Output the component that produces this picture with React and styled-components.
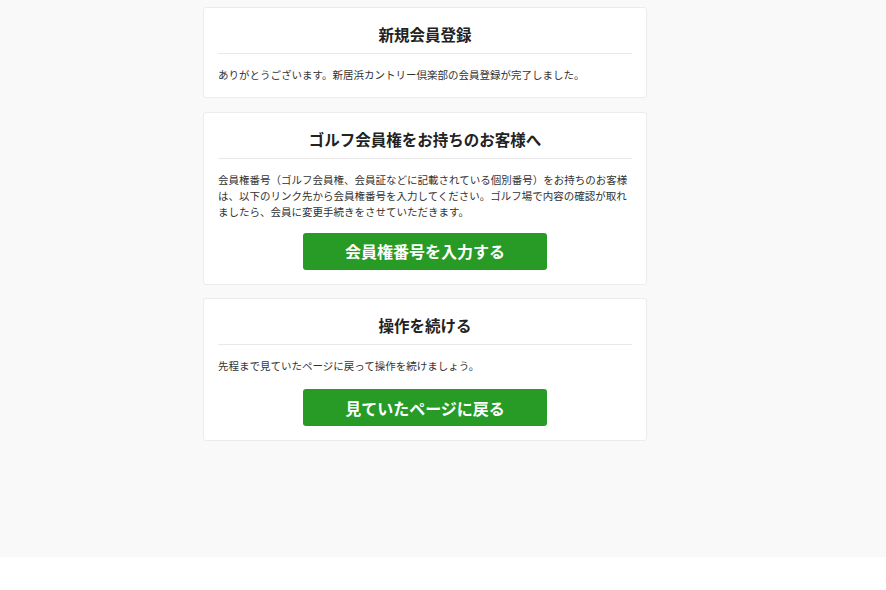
import styled, { createGlobalStyle } from 'styled-components';

const GlobalStyle = createGlobalStyle`
  html, body {
    margin: 0;
    padding: 0;
    background: #fff;
  }
  body {
    font-family: "Noto Sans CJK JP", "Noto Sans", sans-serif;
    color: #333;
  }
`;

const Main = styled.main`
  background-color: #f9f9f9;
  padding: 7px 0 116px 203px;
`;

const Column = styled.div`
  width: 444px;
  display: flex;
  flex-direction: column;
  gap: 13.5px;
`;

const Card = styled.section`
  box-sizing: border-box;
  background: #fff;
  border: 1px solid #ececec;
  border-radius: 3px;
  padding: 14px;
`;

const Title = styled.h2`
  margin: 0 0 13px;
  padding-bottom: 7px;
  border-bottom: 1px solid #e8e8e8;
  font-size: 15.5px;
  line-height: 24px;
  font-weight: 700;
  color: #222;
  text-align: center;
`;

const Text = styled.p`
  margin: 0;
  font-size: 10.5px;
  line-height: 16px;
  color: #333;
`;

const ActionButton = styled.button`
  display: block;
  width: 244px;
  height: 37px;
  margin: ${({ $gap }) => $gap}px auto 0;
  border: none;
  border-radius: 3px;
  background-color: #289b27;
  color: #fff;
  font-family: inherit;
  font-size: 16px;
  font-weight: 700;
  cursor: pointer;
`;

const App = () => {
  return (
    <>
      <GlobalStyle />
      <Main>
        <Column>
          <Card>
            <Title>新規会員登録</Title>
            <Text>ありがとうございます。新居浜カントリー倶楽部の会員登録が完了しました。</Text>
          </Card>

          <Card>
            <Title>ゴルフ会員権をお持ちのお客様へ</Title>
            <Text>
              会員権番号（ゴルフ会員権、会員証などに記載されている個別番号）をお持ちのお客様は、以下のリンク先から会員権番号を入力してください。ゴルフ場で内容の確認が取れましたら、会員に変更手続きをさせていただきます。
            </Text>
            <ActionButton type="button" $gap={13}>
              会員権番号を入力する
            </ActionButton>
          </Card>

          <Card>
            <Title>操作を続ける</Title>
            <Text>先程まで見ていたページに戻って操作を続けましょう。</Text>
            <ActionButton type="button" $gap={15}>
              見ていたページに戻る
            </ActionButton>
          </Card>
        </Column>
      </Main>
    </>
  );
};

export default App;
